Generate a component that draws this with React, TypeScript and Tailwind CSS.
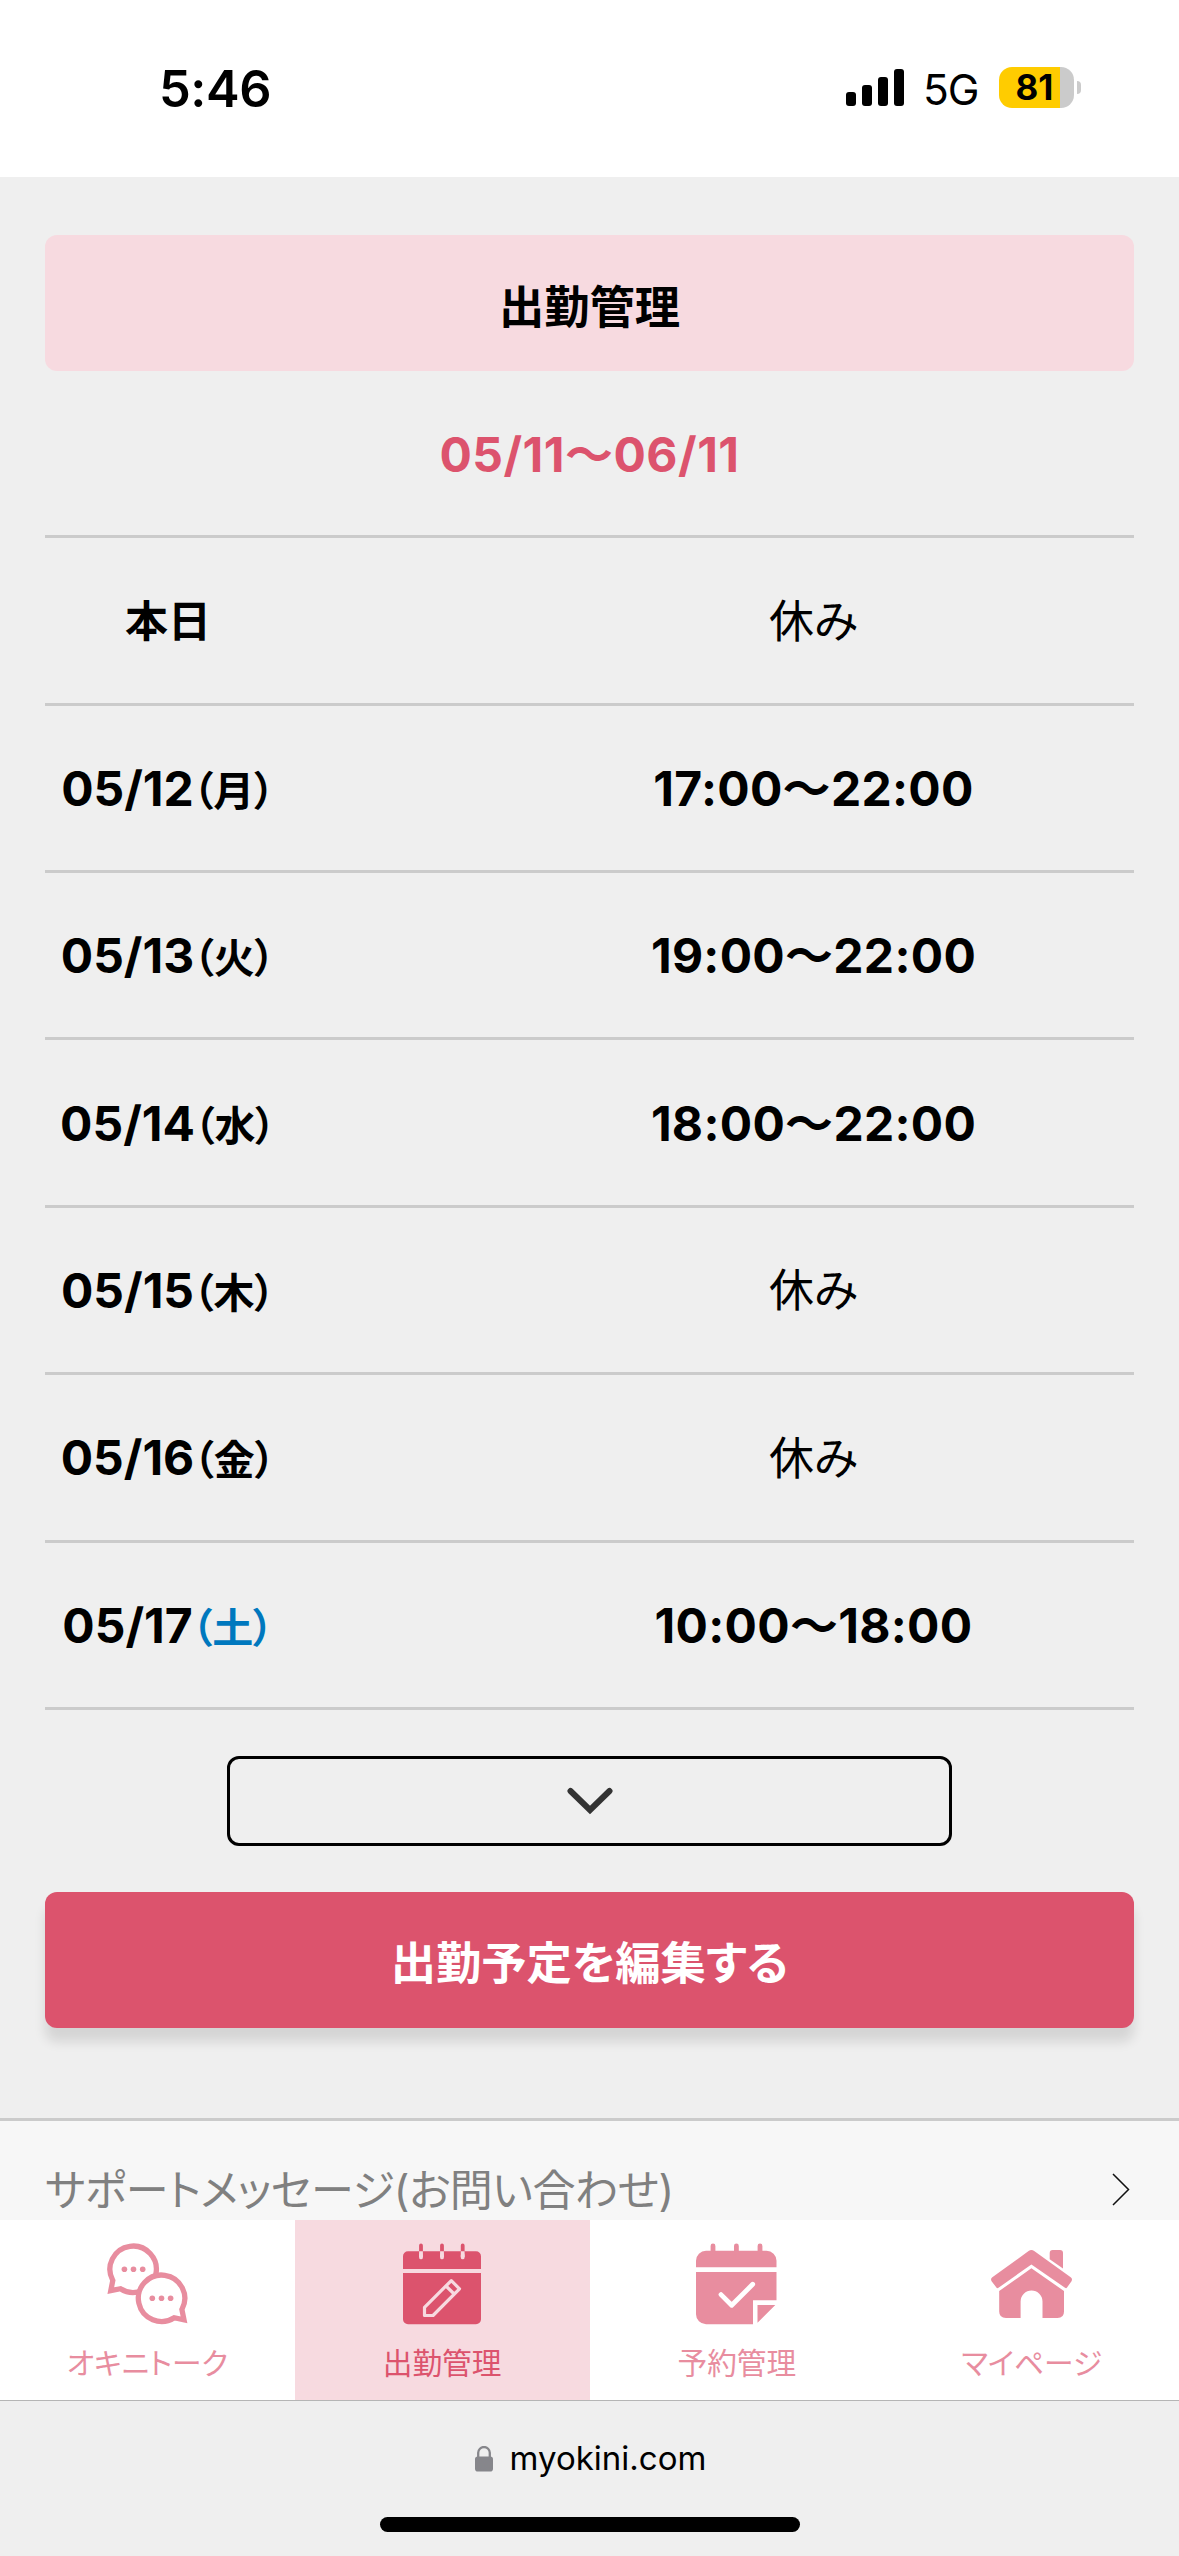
import type { ReactNode } from 'react'

type Shift = { date: string; day?: string; saturday?: boolean; time?: string }

const SHIFTS: Shift[] = [
  { date: '本日' },
  { date: '05/12', day: '月', time: '17:00〜22:00' },
  { date: '05/13', day: '火', time: '19:00〜22:00' },
  { date: '05/14', day: '水', time: '18:00〜22:00' },
  { date: '05/15', day: '木' },
  { date: '05/16', day: '金' },
  { date: '05/17', day: '土', saturday: true, time: '10:00〜18:00' },
]

function StatusBar() {
  return (
    <header className="flex h-[177px] shrink-0 items-start justify-between bg-white pl-[159px] pr-[97px] text-black">
      <div className="mt-[58px] text-[50.5px] font-semibold leading-[62px] tracking-[-0.4px]">5:46</div>
      <div className="mt-[67px] flex h-[41px] items-center">
        <div className="flex h-[37px] items-end gap-[6px]">
          <i className="h-[14px] w-[10px] rounded-[3px] bg-black" />
          <i className="h-[21px] w-[10px] rounded-[3px] bg-black" />
          <i className="h-[29px] w-[10px] rounded-[3px] bg-black" />
          <i className="h-[37px] w-[10px] rounded-[3px] bg-black" />
        </div>
        <span className="ml-[19px] w-[76px] pt-[3px] text-[42.5px] leading-[41px] tracking-[-1px]">5G</span>
        <div className="flex h-[41px] w-[75px] items-center justify-center rounded-[13px] bg-[linear-gradient(to_right,#ffcc00_61px,#cbcbcb_61px)] pr-[4px] text-[35px] font-bold leading-[41px]">
          81
        </div>
        <i className="ml-[3px] mr-px h-[13px] w-[4px] rounded-r-full bg-[#cbcbcb]" />
      </div>
    </header>
  )
}

function ShiftRow({ shift }: { shift: Shift }) {
  return (
    <li className="flex h-[167.4px] items-center justify-between border-b-[3px] border-[#cbcbcb] pt-[2px]">
      <div className="flex w-[242px] items-baseline justify-center whitespace-nowrap pl-[4px] font-bold">
        {shift.day ? (
          <>
            <span className="text-[48px]">{shift.date}</span>
            <span className={shift.saturday ? '-ml-px text-[41px] text-[#0078be]' : '-ml-px text-[41px]'}>
              （{shift.day}）
            </span>
          </>
        ) : (
          <span className="text-[43px]">{shift.date}</span>
        )}
      </div>
      <div className="w-[641px] text-center">
        {shift.time ? (
          <span className="text-[48px] font-bold tracking-[0.3px]">{shift.time}</span>
        ) : (
          <span className="text-[45px]">休み</span>
        )}
      </div>
    </li>
  )
}

function TalkIcon() {
  return (
    <svg width="81" height="82" viewBox="0 0 81 82" fill="none">
      <g stroke="#e88d9f" strokeWidth="5.3">
        <path d="M5.8 37.4A23.2 23.2 0 1 1 13.5 45.7L3.8 47.6Z" />
        <path d="M74.9 66.4A23.2 23.2 0 1 0 67.2 74.7L77 76.8Z" fill="#fff" />
      </g>
      <g fill="#e88d9f">
        <circle cx="17.4" cy="26.3" r="2.8" />
        <circle cx="26.5" cy="26.3" r="2.8" />
        <circle cx="35.7" cy="26.3" r="2.8" />
        <circle cx="45.3" cy="55.3" r="2.8" />
        <circle cx="54.5" cy="55.3" r="2.8" />
        <circle cx="63.6" cy="55.3" r="2.8" />
      </g>
    </svg>
  )
}

function CalendarEditIcon() {
  return (
    <svg width="78" height="82" viewBox="0 0 78 82" fill="none">
      <path d="M0 26V13.3a5 5 0 0 1 5-5h68a5 5 0 0 1 5 5V26ZM0 30h78v46.3a5 5 0 0 1-5 5H5a5 5 0 0 1-5-5Z" fill="#dc536d" />
      <path d="M18 2.5V9M39 2.5V9M59.7 2.5V9" stroke="#dc536d" strokeWidth="3.8" strokeLinecap="round" />
      <path d="M18 8.3V14M39 8.3V14M59.7 8.3V14" stroke="#f7dae0" strokeWidth="3.8" />
      <path d="M18 12V14.4M39 12V14.4M59.7 12V14.4" stroke="#f7dae0" strokeWidth="3.8" strokeLinecap="round" />
      <path d="M21.5 72.5V64.3L48.3 37.6L56.5 45.8L30 72.5ZM43 43L51.2 51" stroke="#f7dae0" strokeWidth="3.2" strokeLinejoin="round" />
    </svg>
  )
}

function CalendarCheckIcon() {
  return (
    <svg width="81" height="82" viewBox="0 0 81 82" fill="none">
      <path d="M0 24.2V17.7a10 10 0 0 1 10-10h60.5a10 10 0 0 1 10 10v6.5ZM0 29h80.5v28.2H57v24.1H10a10 10 0 0 1-10-10ZM61.5 62h17.8L61.5 79.8Z" fill="#e88d9f" />
      <path d="M17 3V9M40.4 3V9M64 3V9" stroke="#e88d9f" strokeWidth="4.8" strokeLinecap="round" />
      <path d="M25 51.6L35.7 62.3L56.7 41.3" stroke="#fff" strokeWidth="4.8" strokeLinecap="round" strokeLinejoin="round" />
    </svg>
  )
}

function HomeIcon() {
  return (
    <svg width="81" height="82" viewBox="0 -7 81 82" fill="#e88d9f">
      <path d="M37.6 1.1Q40.4-1.2 43.2 1.1L79.7 27.3Q81.8 29 80.5 31.2L76 37.6Q75.2 38.7 74 37.7L40.4 14.5L7.5 37.7Q6.2 38.7 5.4 37.6L.6 31.2Q-.8 29 1.3 27.3Z" />
      <path d="M40.4 18.3L73 41V61.5Q73 68 66.5 68H51.5V51.5a10.95 10.95 0 0 0-21.9 0V68H15Q8.2 68 8.2 61.5V41Z" />
      <path d="M58.7 9.3V3Q58.7 0 61.7 0H69Q72 0 72 3V18.5Z" />
    </svg>
  )
}

type Tab = { label: string; icon: ReactNode; active?: boolean }

const TABS: Tab[] = [
  { label: 'オキニトーク', icon: <TalkIcon /> },
  { label: '出勤管理', icon: <CalendarEditIcon />, active: true },
  { label: '予約管理', icon: <CalendarCheckIcon /> },
  { label: 'マイページ', icon: <HomeIcon /> },
]

function TabBar() {
  return (
    <nav className="grid h-[180px] shrink-0 grid-cols-4 bg-white">
      {TABS.map(tab => (
        <a
          key={tab.label}
          className={
            tab.active
              ? 'flex flex-col items-center bg-[#f7dae0] pt-[23px] text-[#dc536d]'
              : 'flex flex-col items-center pt-[23px] text-[#e88d9f]'
          }
        >
          {tab.icon}
          <span className="mt-[17px] whitespace-nowrap text-[29.7px] leading-[42px]">{tab.label}</span>
        </a>
      ))}
    </nav>
  )
}

export default function App() {
  return (
    <div className="flex h-[2556px] w-[1179px] flex-col overflow-hidden bg-[#efefef] font-[Inter,'Noto_Sans_CJK_JP',sans-serif] text-black [font-feature-settings:'palt']">
      <StatusBar />

      <main className="flex h-[1941px] shrink-0 flex-col px-[45px] pt-[58px]">
        <h1 className="flex h-[136px] shrink-0 items-center justify-center rounded-[12px] bg-[#f7dae0] pt-[9px] text-[45.3px] font-bold">
          出勤管理
        </h1>
        <p className="flex h-[164.3px] shrink-0 items-center justify-center pt-[3px] text-[48px] font-bold tracking-[0.5px] text-[#dc536d]">
          05/11〜06/11
        </p>
        <ul className="shrink-0 border-t-[3px] border-[#cbcbcb]">
          {SHIFTS.map(shift => (
            <ShiftRow key={shift.date} shift={shift} />
          ))}
        </ul>

        <button className="mt-[46px] flex h-[90px] w-[725px] shrink-0 items-center justify-center self-center rounded-[12px] border-[3px] border-black">
          <svg width="46" height="28" viewBox="0 0 46 28" fill="none" stroke="#333" strokeWidth="6" strokeLinecap="round">
            <path d="M3.5 4L23 23L42.5 4" />
          </svg>
        </button>
        <button className="mt-[46px] flex h-[136px] shrink-0 items-center justify-center rounded-[12px] bg-[#dc536d] pt-[7px] text-[45.3px] font-bold text-white shadow-[0_14px_12px_rgba(0,0,0,0.11)]">
          出勤予定を編集する
        </button>
      </main>

      <a className="flex h-[102px] shrink-0 items-end justify-between border-t-[3px] border-[#cbcbcb] bg-[#f7f7f7] pl-[45px] pr-[49px] text-[#808080]">
        <span className="pb-[3px] text-[43px] leading-[54px] tracking-[-0.5px]">サポートメッセージ(お問い合わせ)</span>
        <svg className="mb-[14px]" width="18" height="33" viewBox="0 0 18 33" fill="none" stroke="#111" strokeWidth="1.5">
          <path d="M1 1L16.5 16.5L1 32" />
        </svg>
      </a>

      <TabBar />

      <footer className="flex grow flex-col items-center border-t border-[#b5b5b5]">
        <div className="mt-[35px] flex h-[46px] items-center pl-[2px]">
          <svg width="18" height="26" viewBox="0 0 18 26" fill="none">
            <path d="M3.2 13V6.8a5.8 5.8 0 0 1 11.6 0V13" stroke="#86868b" strokeWidth="2.3" />
            <rect y="10.5" width="18" height="15" rx="2.8" fill="#86868b" />
          </svg>
          <span className="ml-[17px] text-[33px]">myokini.com</span>
        </div>
        <div className="mt-[35px] h-[15px] w-[420px] rounded-full bg-black" />
      </footer>
    </div>
  )
}
